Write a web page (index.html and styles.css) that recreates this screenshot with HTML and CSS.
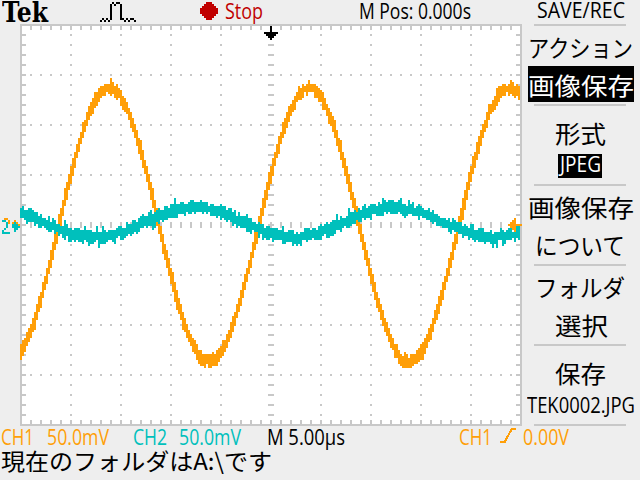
FILE: index.html
```html
<!DOCTYPE html>
<html lang="ja">
<head>
<meta charset="utf-8">
<title>Tek</title>
<link rel="stylesheet" href="styles.css">
</head>
<body>
<div class="scope">
  <main class="main">
    <header class="top">
      <span class="logo"><b data-w="46">Tek</b></span>
      <svg class="pulse" width="38" height="24" viewBox="99 0 38 24"><path d="M100 20h2v2h-2zM102 18h2v2h-2zM104 20h2v2h-2zM106 18h2v2h-2zM108 20h2v2h-2zM110 4h2v16h-2zM112 2h2v2h-2zM114 4h2v2h-2zM116 2h2v2h-2zM118 2h2v2h-2zM120 4h2v16h-2zM122 18h2v2h-2zM124 20h2v2h-2zM126 18h2v2h-2zM128 20h2v2h-2zM130 18h2v2h-2zM132 18h2v2h-2zM134 20h2v2h-2z"/></svg>
      <svg class="dot" width="18" height="18" viewBox="0 0 18 18"><path d="M6 0h6v2h2v2h2v2h2v6h-2v2h-2v2h-2v2H6v-2H4v-2H2v-2H0V6h2V4h2V2h2z"/></svg>
      <span class="stop"><b data-w="38">Stop</b></span>
      <span class="pos"><b data-w="112">M Pos: 0.000s</b></span>
    </header>
    <svg class="plot" id="plot" width="524" height="402" viewBox="0 24 524 402" shape-rendering="crispEdges"></svg>
    <footer class="readout">
      <span class="ch1"><b data-w="33">CH1</b></span>
      <span class="ch1 v1"><b data-w="62">50.0mV</b></span>
      <span class="ch2"><b data-w="34">CH2</b></span>
      <span class="ch2 v2"><b data-w="62">50.0mV</b></span>
      <span class="time"><b data-w="78">M 5.00µs</b></span>
      <span class="ch1 trig"><b data-w="33">CH1</b></span>
      <svg class="edge" width="16" height="18" viewBox="0 0 16 18"><path d="M0 15h5l1-3 2-3 2-4 2-3h4"/></svg>
      <span class="ch1 level"><b data-w="46">0.00V</b></span>
    </footer>
    <p class="message"><b data-w="271">現在のフォルダはA:\です</b></p>
  </main>
  <aside class="menu">
    <h1 class="title"><b data-w="88">SAVE/REC</b></h1>
    <section><p class="kana"><b data-w="105">アクション</b></p><p class="inverse"><b data-w="106">画像保存</b></p></section>
    <section><p class="format"><b data-w="51">形式</b></p><p class="jpeg"><b data-w="41">JPEG</b></p></section>
    <section><p><b data-w="106">画像保存</b></p><p class="kana"><b data-w="90">について</b></p></section>
    <section><p class="kana"><b data-w="90">フォルダ</b></p><p><b data-w="53">選択</b></p></section>
    <section><p class="save"><b data-w="51">保存</b></p><p class="file"><b data-w="108">TEK0002.JPG</b></p></section>
  </aside>
</div>
<script src="script.js"></script>
</body>
</html>
```
FILE: styles.css
```css
* { box-sizing: border-box; margin: 0; padding: 0; }
body { width: 640px; height: 480px; overflow: hidden; background: #eee; color: #000; font: 21px/24px "Open Sans", "Noto Sans CJK JP", sans-serif; }
b { display: inline-block; flex: none; font-weight: inherit; text-align: left; white-space: pre; transform-origin: 0 50%; }
.scope { display: flex; width: 640px; height: 480px; }
.main { width: 524px; flex: none; }
.top { display: flex; height: 24px; padding-left: 2px; }
.top span, .readout span { flex: none; white-space: nowrap; line-height: 22px; }
.top .logo { width: 97px; font-family: "DejaVu Serif", serif; font-weight: bold; font-size: 27px; line-height: 25px; }
.pulse { flex: none; fill: #000; shape-rendering: crispEdges; }
.dot { flex: none; margin: 2px 7px 0 63px; fill: #c00000; shape-rendering: crispEdges; }
.stop { width: 134px; color: #c00000; }
.pos { width: 112px; }
.plot { display: block; }
.readout { display: flex; height: 24px; padding-left: 1px; }
.readout span { line-height: 22px; }
.ch1 { width: 46px; color: #ff9f08; }
.ch2 { width: 46px; color: #00c0bc; }
.readout .v1 { width: 86px; }
.readout .v2 { width: 88px; }
.time { width: 192px; }
.readout .trig { width: 41px; }
.edge { flex: none; margin: 1px 7px 0 0; fill: none; stroke: #ff9f08; stroke-width: 2; shape-rendering: crispEdges; }
.message { height: 28px; padding-left: 1px; font: 23px/21px "Noto Sans CJK JP", sans-serif; }
.menu { width: 114px; flex: none; text-align: center; }
.title { height: 24px; font-weight: normal; font-size: 21px; line-height: 21px; }
.menu section { position: relative; display: flex; flex-direction: column; height: 80px; padding-top: 2px; }
.menu section::before, .menu section:last-child::after { content: ""; display: block; width: 92px; height: 2px; margin: -2px auto 0 10px; background: #c8c8c8; flex: none; }
.menu section:last-child { height: 82px; }
.menu section:last-child::after { margin-top: auto; }
.menu p { display: flex; justify-content: center; height: 38px; line-height: 44px; font-size: 24px; flex: none; }
.menu .inverse { width: 106px; margin: 2px auto 0 4px; height: 36px; line-height: 39px; color: #fff; background: #000; }
.menu .format { height: 48px; line-height: 55px; }
.menu .jpeg { margin-left: 34px; width: 44px; height: 24px; line-height: 20px; font-size: 21px; color: #fff; background: #000; }
.menu .save { height: 40px; line-height: 55px; }
.menu .file { line-height: 38px; font-size: 21px; }
.menu .kana, .menu .format, .menu .save { margin-right: 2px; }
.grid { fill: #c8c8c8; }
.paper { fill: #fff; }
.wave1 { fill: #ff9f08; }
.wave2 { fill: #00c0bc; }
.ink { fill: #000; }
```
FILE: script.js
```js
// Condense each label to its display width.
document.querySelectorAll('b[data-w]').forEach(el => {
  const target = Number(el.dataset.w);
  const natural = el.getBoundingClientRect().width;
  el.style.width = target + 'px';
  el.style.transform = `scaleX(${target / natural})`;
});

const plot = document.getElementById('plot');
const add = (cls, d) => {
  const p = document.createElementNS('http://www.w3.org/2000/svg', 'path');
  p.setAttribute('class', cls);
  p.setAttribute('d', d);
  plot.appendChild(p);
};
const rect = (x, y, w, h) => `M${x} ${y}h${w}v${h}h${-w}z`;

add('paper', rect(22, 26, 498, 398));
let grid = rect(20, 24, 502, 2) + rect(20, 424, 502, 2) + rect(20, 24, 2, 402) + rect(520, 24, 2, 402);
for (let x = 30; x < 520; x += 10) {
  grid += rect(x, 26, 2, 4) + rect(x, 420, 2, 4) + rect(x, 222, 2, 6);
  for (let y = 74; y < 424; y += 50) grid += rect(x, y, 2, 2);
}
for (let y = 34; y < 424; y += 10) {
  grid += rect(22, y, 4, 2) + rect(516, y, 4, 2) + rect(268, y, 6, 2);
  for (let x = 70; x < 520; x += 50) grid += rect(x, y, 2, 2);
}
add('grid', grid);

// Sampled traces, one vertical span per two-pixel column.
let seed = 17;
const rnd = () => (seed = (seed * 16807) % 2147483647) / 2147483647;
const trace = (mid, amp, peak, half) => {
  let d = '';
  for (let x = 20; x < 520; x += 2) {
    const a = (x + 1 - peak) * Math.PI / 100;
    const steep = Math.abs(Math.sin(a) * amp * Math.PI / 100);
    const y = mid - amp * Math.cos(a);
    const spike = rnd() > 0.9 ? 3 : 0;
    const spikeDown = rnd() > 0.92 ? 3 : 0;
    const up = half + steep + (rnd() * 5 + spike) * (steep > 2 ? 0.6 : 1);
    const down = half + steep + (rnd() * 5 + spikeDown) * (steep > 2 ? 0.6 : 1);
    const top = Math.round((y - up) / 2) * 2;
    d += rect(x, top, 2, Math.round((y + down) / 2) * 2 - top);
  }
  return d;
};
add('wave1', trace(225, 137, 109, 2.8));
add('wave2', trace(222.5, 15, 194, 3.2));

add('ink', 'M270 26h2v6h6v2h-2v2h-2v2h-2v2h-2v-2h-2v-2h-2v-2h-2v-2h6z');
add('wave1', 'M508 224h2v-2h2v-2h2v-2h2v6h6v2h-6v6h-2v-2h-2v-2h-2v-2h-2z');
add('wave1', 'M4 218h4v2h2v4h-2v-4h-4zM12 222h2v-2h2v2h2v2h2v2h-8z');
add('wave2', 'M2 220h4v2H2zM6 222h2v6h-2zM4 228h2v2h-2zM2 230h2v2h6v2H2zM12 224h2v-2h2v2h2v2h2v2h-2v2h-2v2h-2v-4h-2z');
```
